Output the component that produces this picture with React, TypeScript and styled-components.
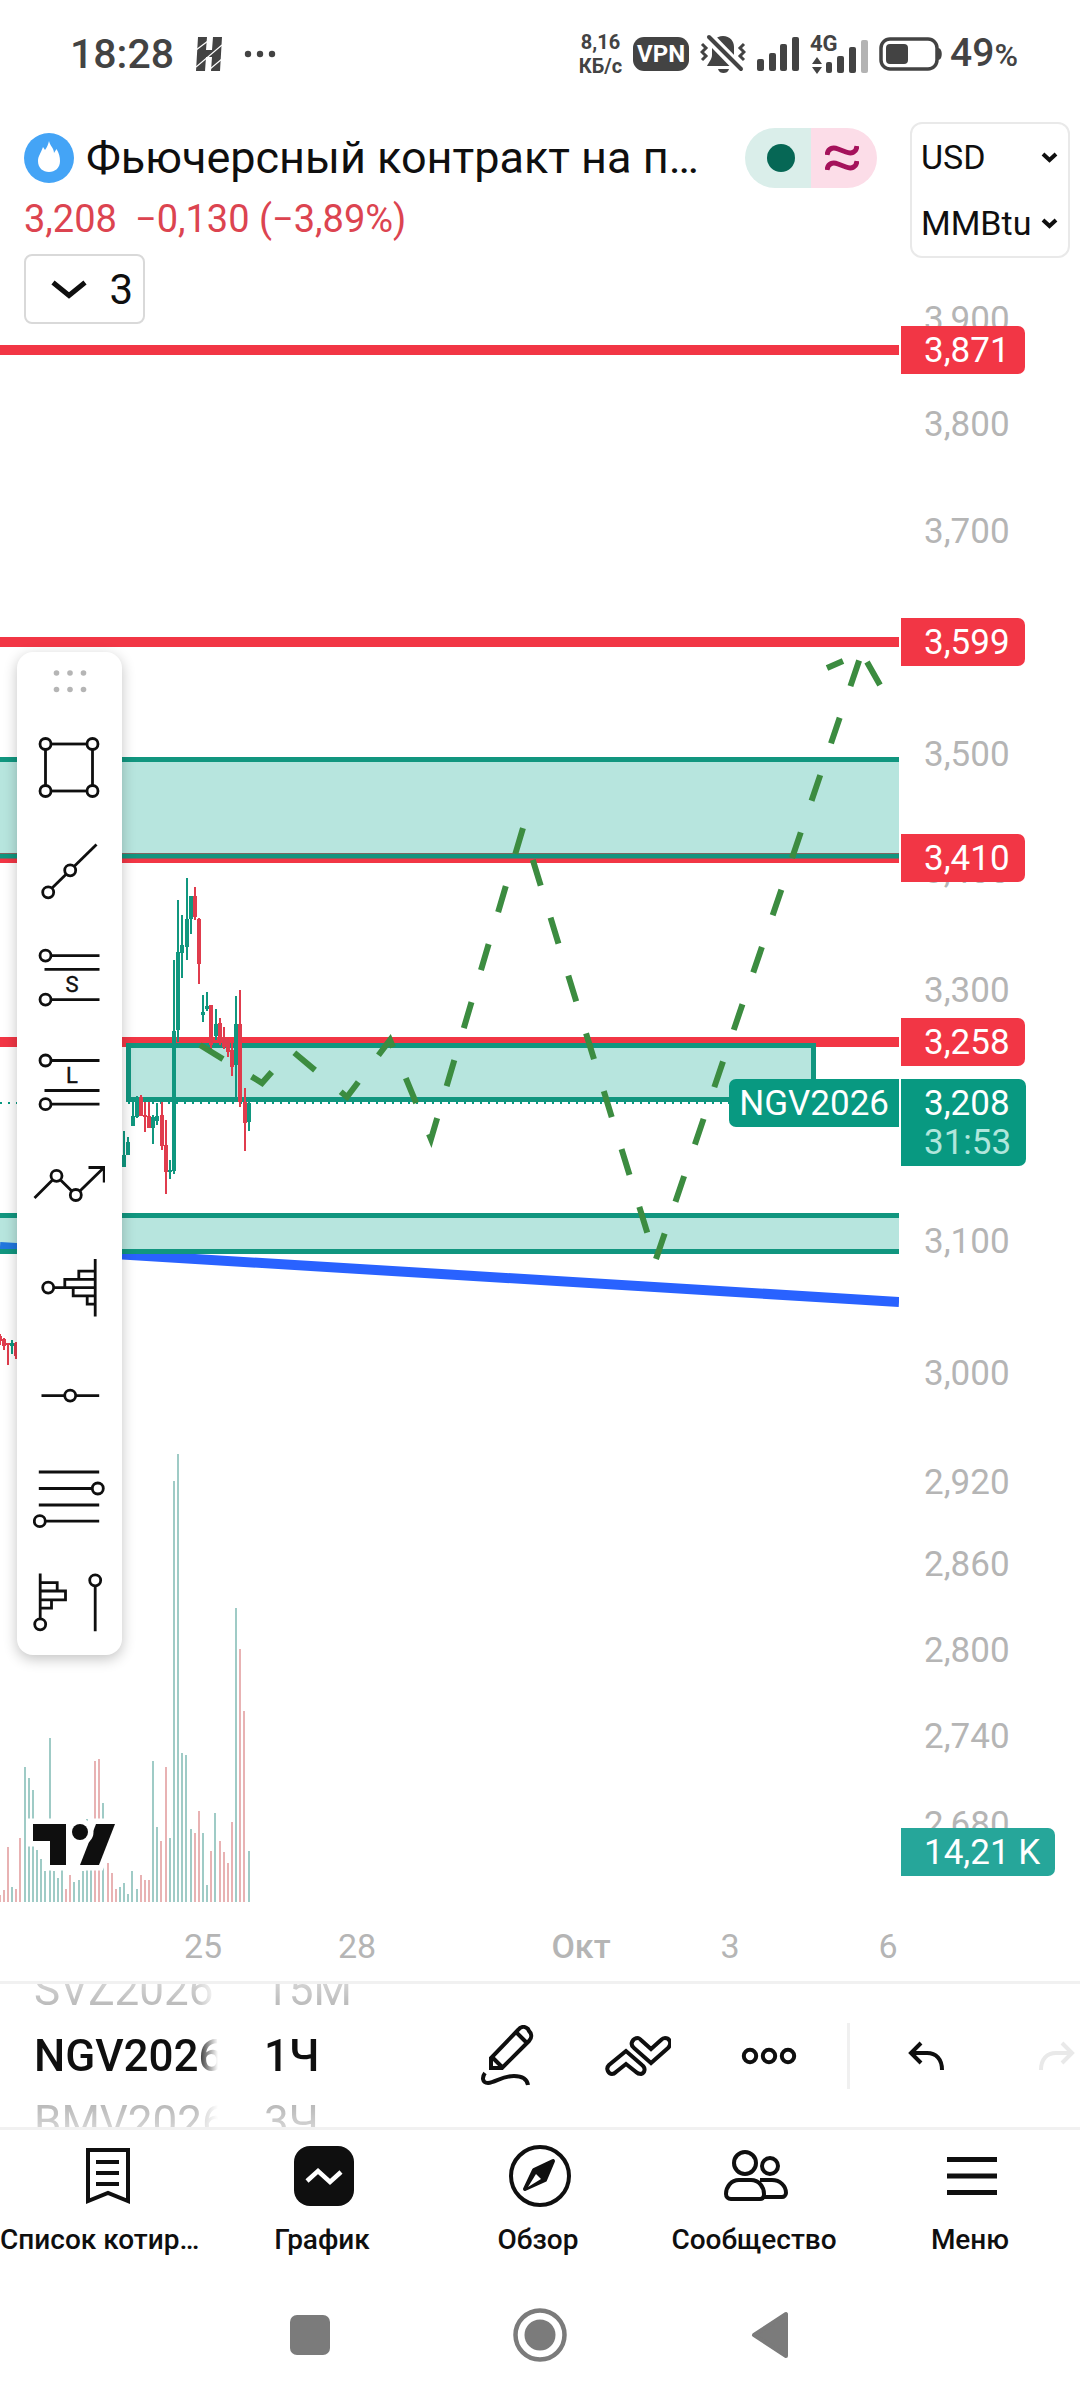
import React from "react";
import styled, { createGlobalStyle } from "styled-components";

const GlobalStyle = createGlobalStyle`
  *, *::before, *::after { box-sizing: border-box; }
  body { margin: 0; background: #fff; }
  button, select { font: inherit; color: inherit; background: none; border: 0; padding: 0; margin: 0; }
  ul { list-style: none; margin: 0; padding: 0; }
  svg { display: block; }
`;

const INK = "#0f0f0f";
const RED = "#f23645";
const GREEN = "#089981";
const MUTED = "#b5b5b5";
const STATUS = "#434343";

const Page = styled.div`
  display: flex;
  flex-direction: column;
  min-height: 100vh;
  overflow: hidden;
  color: ${INK};
  font-family: Roboto, "Noto Sans", sans-serif;
`;

/* ---------- system status bar ---------- */

const StatusBar = styled.header`
  display: flex;
  align-items: center;
  justify-content: space-between;
  height: 108px;
  padding: 0 62px 0 70px;
  color: ${STATUS};
`;

const StatusGroup = styled.div<{ $gap: number }>`
  display: flex;
  align-items: center;
  gap: ${(p) => p.$gap}px;
`;

const Clock = styled.time`
  font-size: 41px;
  font-weight: 500;
  line-height: 48px;
`;

const Speed = styled.div`
  font-size: 20px;
  font-weight: 700;
  line-height: 24px;
  text-align: center;
`;

const Vpn = styled.div`
  width: 56px;
  border-radius: 11px;
  background: ${STATUS};
  color: #fff;
  font-size: 24px;
  font-weight: 700;
  line-height: 34px;
  text-align: center;
`;

const BatteryGroup = styled.div`
  display: flex;
  align-items: center;
  gap: 7px;
`;

const BatteryText = styled.span`
  font-size: 39px;
  font-weight: 500;
  line-height: 48px;
  small { font-size: 32px; }
`;

/* ---------- chart screen ---------- */

const Screen = styled.main`
  display: grid;
  grid-template-columns: 1fr 181px;
  height: 1873px;
  flex: none;
`;

const ChartColumn = styled.section`
  display: flex;
  flex-direction: column;
  min-width: 0;
`;

const Legend = styled.div`
  display: flex;
  flex-direction: column;
  align-items: flex-start;
  padding: 20px 22px 0 24px;
`;

const TitleRow = styled.div`
  display: flex;
  align-items: center;
  gap: 12px;
  width: 100%;
  height: 60px;
`;

const Title = styled.h1`
  flex: 1;
  min-width: 0;
  margin: 0;
  overflow: hidden;
  white-space: nowrap;
  font-size: 45px;
  font-weight: 400;
  line-height: 60px;
`;

const Pill = styled.div`
  display: flex;
  border-radius: 30px;
  overflow: hidden;
`;

const PillHalf = styled.span<{ $bg: string; $side: "start" | "end" }>`
  display: flex;
  align-items: center;
  justify-content: flex-${(p) => p.$side};
  width: 66px;
  height: 60px;
  padding: 0 16px 0 14px;
  background: ${(p) => p.$bg};
`;

const PriceRow = styled.div`
  display: flex;
  gap: 18px;
  margin: 6px 0 10px;
  color: #dc4450;
  font-size: 38px;
  line-height: 50px;
`;

const CollapseButton = styled.button`
  display: flex;
  align-items: center;
  justify-content: space-between;
  width: 121px;
  height: 70px;
  padding: 0 10px 0 25px;
  border: 2px solid #d9d9d9;
  border-radius: 8px;
  font-size: 42px;
`;

const Plot = styled.div`
  position: relative;
  flex: 1;
  min-height: 0;
`;

const Drawing = styled.svg`
  width: 100%;
  height: 100%;
`;

const SymbolTag = styled.span`
  position: absolute;
  right: 0;
  padding: 2px 10px 0;
  border-radius: 7px 0 0 7px;
  background: ${GREEN};
  color: #fff;
  font-size: 35px;
  line-height: 46px;
`;

const ToolPanel = styled.aside`
  position: absolute;
  top: 328px;
  left: 17px;
  display: flex;
  flex-direction: column;
  width: 105px;
  height: 1003px;
  border-radius: 16px;
  background: #fff;
  box-shadow: 0 4px 14px rgba(0, 0, 0, 0.24);
`;

const Handle = styled.div`
  display: flex;
  justify-content: center;
  height: 63px;
  padding-top: 17px;
`;

const ToolButton = styled.button`
  display: flex;
  flex: 1;
  align-items: center;
  justify-content: center;
  padding-right: 1px;
`;

const TimeAxis = styled.div`
  position: relative;
  height: 79px;
`;

const TimeLabel = styled.span<{ $strong?: boolean }>`
  position: absolute;
  top: 24px;
  transform: translateX(-50%);
  color: ${MUTED};
  font-size: 34px;
  font-weight: ${(p) => (p.$strong ? 500 : 400)};
  line-height: 40px;
`;

const ScaleColumn = styled.section`
  display: flex;
  flex-direction: column;
  padding-top: 14px;
`;

const Units = styled.div`
  margin: 0 10px 0 11px;
  border: 2px solid #e9e9e9;
  border-radius: 12px;
`;

const UnitField = styled.label`
  display: grid;
  align-items: center;
  height: 66px;
  padding: 0 10px 0 9px;
  > * { grid-area: 1 / 1; }
  > svg { justify-self: end; pointer-events: none; }
`;

const UnitSelect = styled.select`
  width: 100%;
  appearance: none;
  font-size: 34px;
  line-height: 40px;
`;

const PriceAxis = styled.div`
  position: relative;
  flex: 1;
`;

const PriceLabel = styled.span`
  position: absolute;
  left: 25px;
  padding-top: 2px;
  transform: translateY(-50%);
  color: ${MUTED};
  font-size: 35px;
  line-height: 40px;
`;

const PriceTag = styled.div<{ $bg: string }>`
  position: absolute;
  left: 2px;
  padding: 2px 15px 0 23px;
  border-radius: 0 7px 7px 0;
  background: ${(p) => p.$bg};
  color: #fff;
  font-size: 35px;
  line-height: 46px;
  white-space: nowrap;
`;

const Countdown = styled.div`
  padding-bottom: 8px;
  color: #b0e6dc;
  line-height: 31px;
`;

/* ---------- chart toolbar ---------- */

const Toolbar = styled.div`
  display: flex;
  align-items: center;
  flex: none;
  height: 149px;
  padding-left: 34px;
  border-top: 3px solid #f1f1f1;
  border-bottom: 3px solid #f1f1f1;
  overflow: hidden;
`;

const WheelGroup = styled.div`
  display: flex;
  gap: 46px;
  margin-right: auto;
  mask-image: linear-gradient(to bottom, rgba(0, 0, 0, 0.5), #000 28%, #000 72%, rgba(0, 0, 0, 0.5));
`;

const Wheel = styled.ul<{ $width: number; $fade?: boolean }>`
  display: flex;
  flex: none;
  flex-direction: column;
  justify-content: center;
  width: ${(p) => p.$width}px;
  height: 143px;
  overflow: hidden;
  mask-image: ${(p) => (p.$fade ? "linear-gradient(to right, #000 88%, transparent)" : "none")};
`;

const WheelItem = styled.li<{ $active?: boolean }>`
  flex: none;
  height: 66px;
  button {
    display: block;
    color: ${(p) => (p.$active ? INK : "#a6a6a6")};
    font-size: 44px;
    font-weight: ${(p) => (p.$active ? 500 : 400)};
    line-height: 66px;
    white-space: nowrap;
  }
`;

const Actions = styled.div`
  display: flex;
  align-items: center;
  flex: none;
  margin-right: -42px;
`;

const ActionButton = styled.button`
  display: flex;
  align-items: center;
  justify-content: center;
  width: 131px;
  height: 100px;
  &:disabled { color: #e9e9e9; }
`;

const Separator = styled.span`
  width: 3px;
  height: 66px;
  margin: 0 10px 0 13px;
  background: #f0f0f0;
`;

/* ---------- bottom navigation ---------- */

const TabBar = styled.nav`
  display: grid;
  grid-template-columns: repeat(5, 1fr);
  height: 150px;
  padding-top: 12px;
`;

const Tab = styled.a`
  display: flex;
  flex-direction: column;
  align-items: center;
  min-width: 0;
  color: inherit;
  text-decoration: none;
`;

const TabIcon = styled.span`
  display: flex;
  align-items: center;
  height: 68px;
`;

const TabText = styled.span`
  max-width: 100%;
  overflow: hidden;
  margin-top: 13px;
  padding-right: 4px;
  text-overflow: ellipsis;
  white-space: nowrap;
  font-size: 28px;
  font-weight: 500;
  line-height: 34px;
`;

const SystemNav = styled.footer`
  display: flex;
  justify-content: center;
  gap: 170px;
  padding: 25px 0 35px;
`;

const SystemButton = styled.button`
  display: flex;
  align-items: center;
  justify-content: center;
  width: 60px;
  height: 60px;
  color: #7b7b7b;
`;

/* ---------- data ---------- */

const AXIS_TOP = 258;

const scale: [string, number][] = [
  ["3,900", 319], ["3,800", 424], ["3,700", 531], ["3,500", 754], ["3,400", 871],
  ["3,300", 990], ["3,100", 1241], ["3,000", 1373], ["2,920", 1482], ["2,860", 1564],
  ["2,800", 1650], ["2,740", 1736], ["2,680", 1824],
];

const levels: [string, number][] = [["3,871", 350], ["3,599", 642], ["3,410", 858], ["3,258", 1042]];

const dates: [string, number, boolean?][] = [["25", 203], ["28", 357], ["Окт", 581, true], ["3", 730], ["6", 888]];

// [x, high, low, body top, body bottom, rising]
const candles: [number, number, number, number, number, number][] = [
  [0, 1334, 1345, 1336, 1341, 0], [4, 1338, 1350, 1339, 1346, 0], [8, 1343, 1365, 1343, 1345, 0],
  [12, 1340, 1354, 1343, 1346, 1], [16, 1342, 1359, 1343, 1356, 0],
  [124, 1131, 1167, 1155, 1167, 1], [128, 1137, 1155, 1142, 1155, 1], [133, 1102, 1126, 1116, 1126, 1],
  [137, 1096, 1118, 1102, 1117, 1], [141, 1095, 1116, 1097, 1116, 0], [145, 1102, 1132, 1115, 1117, 0],
  [149, 1102, 1128, 1116, 1128, 0], [153, 1115, 1144, 1117, 1128, 1], [157, 1103, 1125, 1116, 1121, 1],
  [162, 1102, 1150, 1115, 1146, 0], [166, 1120, 1194, 1145, 1172, 0], [170, 1160, 1179, 1170, 1172, 1],
  [174, 960, 1174, 1031, 1171, 1], [178, 900, 1042, 952, 1030, 1], [182, 915, 978, 945, 953, 1],
  [187, 878, 960, 919, 947, 1], [191, 896, 934, 896, 919, 1], [195, 887, 920, 896, 917, 0],
  [199, 918, 984, 919, 964, 0], [203, 995, 1022, 1012, 1015, 1], [207, 992, 1011, 1006, 1009, 1],
  [211, 1005, 1050, 1005, 1045, 0], [216, 1009, 1040, 1024, 1036, 1], [220, 1018, 1045, 1023, 1040, 0],
  [224, 1027, 1049, 1038, 1047, 0], [228, 1038, 1057, 1040, 1052, 0], [232, 1042, 1076, 1050, 1067, 0],
  [236, 996, 1097, 1024, 1065, 1], [240, 990, 1107, 1024, 1102, 0], [245, 1088, 1151, 1102, 1123, 0],
  [249, 1102, 1131, 1103, 1122, 1],
];

// [x, top, rising]
const volume: [number, number, number][] = [
  [0, 1895, 0], [4, 1890, 0], [8, 1847, 0], [12, 1887, 1], [16, 1889, 0], [20, 1838, 0], [25, 1767, 1],
  [29, 1778, 1], [33, 1790, 1], [37, 1850, 1], [41, 1859, 1], [45, 1871, 1], [50, 1738, 1], [54, 1871, 1],
  [58, 1878, 1], [62, 1870, 1], [66, 1889, 0], [70, 1875, 0], [74, 1882, 1], [79, 1880, 1], [83, 1871, 1],
  [87, 1819, 1], [91, 1867, 1], [95, 1761, 0], [99, 1759, 0], [103, 1803, 1], [108, 1863, 0], [112, 1873, 0],
  [116, 1889, 0], [120, 1887, 1], [124, 1883, 1], [128, 1894, 1], [132, 1871, 1], [137, 1889, 1],
  [141, 1875, 0], [145, 1880, 0], [149, 1880, 0], [153, 1761, 1], [157, 1827, 1], [161, 1841, 0],
  [166, 1767, 0], [170, 1838, 1], [174, 1481, 1], [178, 1454, 1], [182, 1753, 1], [186, 1755, 1],
  [191, 1829, 1], [195, 1833, 0], [199, 1811, 0], [203, 1833, 1], [207, 1885, 1], [211, 1851, 0],
  [215, 1813, 1], [220, 1841, 0], [224, 1852, 0], [228, 1863, 0], [232, 1822, 0], [236, 1608, 1],
  [240, 1649, 0], [244, 1711, 0], [249, 1851, 1],
];

/* ---------- pictures ---------- */

const Chevron = ({ w, h, s }: { w: number; h: number; s: number }) => (
  <svg width={w} height={h} viewBox={`0 0 ${w} ${h}`} fill="none" stroke={INK} strokeWidth={s}>
    <path d={`M2 ${s / 2 + 1} L${w / 2} ${h - s / 2 - 1} L${w - 2} ${s / 2 + 1}`} />
  </svg>
);

const Bars = () => (
  <svg width="42" height="34" viewBox="0 0 42 34" fill={STATUS}>
    <rect x="0" y="22" width="7" height="12" rx="2" />
    <rect x="12" y="16" width="7" height="18" rx="2" />
    <rect x="23" y="7" width="7" height="27" rx="2" />
    <rect x="35" y="0" width="7" height="34" rx="2" />
  </svg>
);

const MutedBell = () => (
  <svg width="46" height="40" viewBox="0 0 46 40" fill={STATUS}>
    <path d="M23 2c-7 0-11 5-11 11v8c0 4-3 7-5 11h32c-2-4-5-7-5-11v-8c0-6-4-11-11-11z" />
    <path d="M18 35h11c-1 3-3 4-5.500 4s-4.500-1-5.500-4z" />
    <path d="M6 0L43 38" stroke="#fff" strokeWidth="11" />
    <path d="M9 3L41 35" stroke={STATUS} strokeWidth="4" strokeLinecap="round" />
    <path d="M2 10l4 4-4 4 4 4-4 4M44 10l-4 4 4 4-4 4 4 4" fill="none" stroke={STATUS} strokeWidth="3" />
  </svg>
);

const Mobile4G = () => (
  <svg width="58" height="40" viewBox="0 0 58 40" fill={STATUS}>
    <text x="0" y="17" fontSize="22" fontWeight="700">4G</text>
    <path d="M7 23l5 7H2zM7 40l5-7H2z" />
    <rect x="16" y="28" width="6" height="11" rx="2" />
    <rect x="27" y="22" width="7" height="17" rx="2" />
    <rect x="39" y="13" width="7" height="26" rx="2" />
    <rect x="51" y="6" width="7" height="33" rx="2" fill="#b3b3b3" />
  </svg>
);

const Node = ({ x, y }: { x: number; y: number }) => <circle cx={x} cy={y} r="5.500" fill="#fff" />;

const ToolGlyph = ({ children }: { children: React.ReactNode }) => (
  <svg width="72" height="72" viewBox="0 0 72 72" fill="none" stroke={INK} strokeWidth="2.800">
    {children}
  </svg>
);

const tools: [string, React.ReactNode][] = [
  ["Прямоугольник", <>
    <rect x="12.500" y="13" width="47" height="47" />
    <Node x={12.5} y={13} /><Node x={59.5} y={13} /><Node x={12.5} y={60} /><Node x={59.5} y={60} />
  </>],
  ["Линия тренда", <>
    <path d="M15 56L63.500 8.500" /><Node x={15.2} y={56.3} /><Node x={37.2} y={34.3} />
  </>],
  ["Короткая позиция", <>
    <path d="M12 15.600H66.500M11.500 29.300H66.500M12 59.600H66.500" />
    <Node x={12.5} y={15.6} /><Node x={12.5} y={59.6} />
    <text x="39" y="52" textAnchor="middle" fontSize="22" fill={INK} strokeWidth="0.400">S</text>
  </>],
  ["Длинная позиция", <>
    <path d="M12 15.500H66.500M11.500 45.500H66.500M12 59.200H66.500" />
    <Node x={12.5} y={15.5} /><Node x={12.5} y={59.2} />
    <text x="39" y="38" textAnchor="middle" fontSize="22" fill={INK} strokeWidth="0.400">L</text>
  </>],
  ["Путь", <>
    <path d="M1.500 49L23.500 27L42.800 46L71 18.500M55.500 18.500H71.200V33.500" />
    <Node x={23.5} y={26.8} /><Node x={42.8} y={46} />
  </>],
  ["Профиль объёма с привязкой", <>
    <path d="M62.200 6V63.600M62 18.100H45.800V26.400M62 26.400H31.800V34.600M15 34.600H62M40.200 34.600V42.900H62M54.200 42.900V51.200H62" />
    <Node x={15.2} y={34.6} />
  </>],
  ["Горизонтальная линия", <>
    <path d="M8.500 37.600H66.200" /><Node x={37.2} y={37.6} />
  </>],
  ["Коррекция по Фибоначчи", <>
    <path d="M5.800 10H66.200M5.800 26.500H64M5.800 43H66.200M7 59.200H66.200" />
    <Node x={64.8} y={26.5} /><Node x={6.8} y={59.2} />
  </>],
  ["Профиль объёма за период", <>
    <path d="M7.200 6.400V57M7.200 15.700H24.200V24M7.200 24H32.500V32.900H7.200M18.500 32.900V41.200H7.200M62.200 13V64.300" />
    <Node x={7.2} y={57.3} /><Node x={62.2} y={13.3} />
  </>],
];

const zoneFill = "rgba(15, 168, 145, 0.3)";

const ChartDrawing = () => (
  <Drawing viewBox="0 324 899 1578" preserveAspectRatio="none" role="img" aria-label="Свечной график NGV2026">
    <path d="M0 350H899M0 642H899M0 858H899M0 1042H899" stroke={RED} strokeWidth="10" />
    <path d="M0 1247L899 1302" stroke="#2962ff" strokeWidth="10" />
    <g fill={zoneFill}>
      <rect x="0" y="760" width="899" height="93" fill="#b7e5de" />
      <rect x="128" y="1048" width="686" height="50" />
      <rect x="0" y="1216" width="899" height="35" />
    </g>
    <path d="M0 759.500H899M0 856H899M0 1215.500H899M0 1251.500H899" stroke="#11967f" strokeWidth="5" />
    <rect x="128.500" y="1045.500" width="685" height="54" fill="none" stroke="#11967f" strokeWidth="5" />
    <path d="M0 1103H742" stroke={GREEN} strokeWidth="2" strokeDasharray="2 6" />
    <g>
      {candles.map(([x, high, low, top, bottom, up]) => (
        <g key={x} fill={up ? "#10977f" : "#e03c4d"}>
          <rect x={x - 1} y={high} width="2" height={low - high} />
          <rect x={x - 2} y={top} width="4" height={bottom - top} />
        </g>
      ))}
    </g>
    <g>
      {volume.map(([x, top, up]) => (
        <rect key={x} x={x - 1} y={top} width="2" height={1902 - top} fill={up ? "#9fcbc6" : "#e8b2b3"} />
      ))}
    </g>
    <g fill="none" stroke="#3c8c40" strokeWidth="6">
      <path d="M200 1045L262 1083L291 1050L347 1097L390 1040L431 1139L523 828L655 1258" strokeDasharray="27 33.500" />
      <path d="M656 1259L861 655" strokeDasharray="27 33.500" />
      <path d="M827 668L843 661M867 662L880 685" />
    </g>
    <g fill={INK} stroke="#fff" strokeWidth="11" paintOrder="stroke">
      <path d="M33 1824H66V1865H50V1841H33Z" />
      <path d="M96 1824H115L99 1865H80Z" />
      <circle cx="80" cy="1832" r="8" />
    </g>
  </Drawing>
);

export default function App() {
  return (
    <Page>
      <GlobalStyle />
      <StatusBar>
        <StatusGroup $gap={22}>
          <Clock>18:28</Clock>
          <svg width="26" height="34" viewBox="0 0 26 34">
            <path d="M2 0H11L10 13H16L17 0H26L24 34H15L16 20H10L9 34H0Z" fill={STATUS} />
            <path d="M0 13L12 4M0 30L26 8M14 32L26 22" stroke="#fff" strokeWidth="1.200" />
          </svg>
          <svg width="32" height="8" viewBox="0 0 32 8" fill={STATUS}>
            <circle cx="4" cy="4" r="3.200" /><circle cx="16" cy="4" r="3.200" /><circle cx="28" cy="4" r="3.200" />
          </svg>
        </StatusGroup>
        <StatusGroup $gap={11}>
          <Speed>8,16<br />КБ/с</Speed>
          <Vpn>VPN</Vpn>
          <MutedBell />
          <Bars />
          <Mobile4G />
          <BatteryGroup>
            <svg width="64" height="34" viewBox="0 0 64 34">
              <rect x="2" y="2" width="56" height="30" rx="9" fill="none" stroke={STATUS} strokeWidth="3.500" />
              <rect x="7" y="7" width="22" height="20" rx="4" fill={STATUS} />
              <path d="M59 11c5 0 5 12 0 12z" fill={STATUS} />
            </svg>
            <BatteryText>49<small>%</small></BatteryText>
          </BatteryGroup>
        </StatusGroup>
      </StatusBar>

      <Screen>
        <ChartColumn>
          <Legend>
            <TitleRow>
              <svg width="50" height="50" viewBox="0 0 50 50">
                <circle cx="25" cy="25" r="25" fill="#44a4f6" />
                <path d="M25 8c1 5 5 7 5 12l2.500-4C35 20 36 24 36 28c0 7-5 11-11 11S14 35 14 28c0-5 3-8 5-14l2 3c2-3 3-5 4-9z" fill="#fff" />
              </svg>
              <Title>Фьючерсный контракт на п…</Title>
              <Pill>
                <PillHalf $bg="#daeeea" $side="end">
                  <svg width="28" height="28" viewBox="0 0 28 28"><circle cx="14" cy="14" r="14" fill="#066755" /></svg>
                </PillHalf>
                <PillHalf $bg="#fcdde8" $side="start">
                  <svg width="34" height="28" viewBox="0 0 34 28" fill="none" stroke="#a5125b" strokeWidth="5">
                    <path d="M2 11C3 4 8 3 13 5L21 8C26 10 31 9 32 2" />
                    <path d="M2 26C3 19 8 18 13 20L21 23C26 25 31 24 32 17" />
                  </svg>
                </PillHalf>
              </Pill>
            </TitleRow>
            <PriceRow>
              <span>3,208</span>
              <span>−0,130 (−3,89%)</span>
            </PriceRow>
            <CollapseButton aria-label="Индикаторы: 3">
              <Chevron w={36} h={20} s={5} />
              <span>3</span>
            </CollapseButton>
          </Legend>

          <Plot>
            <ChartDrawing />
            <SymbolTag style={{ top: 1079 - 324 }}>NGV2026</SymbolTag>
            <ToolPanel>
              <Handle>
                <svg width="34" height="24" viewBox="0 0 34 24" fill={MUTED}>
                  {[3.5, 17, 30.5].map((x) => (
                    <React.Fragment key={x}>
                      <circle cx={x} cy="4" r="2.800" /><circle cx={x} cy="20.500" r="2.800" />
                    </React.Fragment>
                  ))}
                </svg>
              </Handle>
              {tools.map(([name, glyph]) => (
                <ToolButton key={name} aria-label={name}>
                  <ToolGlyph>{glyph}</ToolGlyph>
                </ToolButton>
              ))}
            </ToolPanel>
          </Plot>

          <TimeAxis>
            {dates.map(([text, x, strong]) => (
              <TimeLabel key={text} $strong={strong} style={{ left: x }}>{text}</TimeLabel>
            ))}
          </TimeAxis>
        </ChartColumn>

        <ScaleColumn>
          <Units>
            <UnitField>
              <UnitSelect aria-label="Валюта"><option>USD</option></UnitSelect>
              <Chevron w={17} h={12} s={4} />
            </UnitField>
            <UnitField>
              <UnitSelect aria-label="Единица измерения"><option>MMBtu</option></UnitSelect>
              <Chevron w={17} h={12} s={4} />
            </UnitField>
          </Units>
          <PriceAxis>
            {scale.map(([text, y]) => (
              <PriceLabel key={text} style={{ top: y - AXIS_TOP }}>{text}</PriceLabel>
            ))}
            {levels.map(([text, y]) => (
              <PriceTag key={text} $bg={RED} style={{ top: y - 24 - AXIS_TOP }}>{text}</PriceTag>
            ))}
            <PriceTag $bg={GREEN} style={{ top: 1079 - AXIS_TOP }}>
              3,208
              <Countdown>31:53</Countdown>
            </PriceTag>
            <PriceTag $bg="#26a69a" style={{ top: 1828 - AXIS_TOP }}>14,21 K</PriceTag>
          </PriceAxis>
        </ScaleColumn>
      </Screen>

      <Toolbar>
        <WheelGroup>
          <Wheel $width={184} $fade>
            <WheelItem><button>SVZ2026</button></WheelItem>
            <WheelItem $active><button>NGV2026</button></WheelItem>
            <WheelItem><button>BMV2026</button></WheelItem>
          </Wheel>
          <Wheel $width={120}>
            <WheelItem><button>15М</button></WheelItem>
            <WheelItem $active><button>1Ч</button></WheelItem>
            <WheelItem><button>3Ч</button></WheelItem>
          </Wheel>
        </WheelGroup>
        <Actions>
          <ActionButton aria-label="Рисование">
            <svg width="54" height="62" viewBox="0 0 54 62" fill="none" stroke="currentColor" strokeWidth="4">
              <path d="M11 43V33L38 5C41 1 45 1 48 4L49 6C52 9 52 13 49 16L22 43ZM11 31L23 43M36 7L47 18" />
              <path d="M5 48C2 52 2 58 8 58C16 57 22 51 34 51C42 51 47 54 48 60" />
            </svg>
          </ActionButton>
          <ActionButton aria-label="Шаблоны">
            <svg width="66" height="40" viewBox="0 0 66 40" fill="none" stroke="currentColor" strokeWidth="4">
              <path d="M21 15L4 29C0 33 4 38 7 38Q9 38 11 36L21 28L31 36Q33 38 36 38C40 37 41 32 37 29Z" />
              <path d="M46 27L29 12C24 8 28 2 33 2Q34 2 36 4L46 13L56 4Q58 2 60 2C65 2 67 8 63 12Z" />
            </svg>
          </ActionButton>
          <ActionButton aria-label="Ещё">
            <svg width="56" height="18" viewBox="0 0 56 18" fill="none" stroke="currentColor" strokeWidth="4">
              <circle cx="9" cy="9" r="6.200" /><circle cx="28" cy="9" r="6.200" /><circle cx="47" cy="9" r="6.200" />
            </svg>
          </ActionButton>
          <Separator />
          <ActionButton aria-label="Отменить">
            <svg width="36" height="30" viewBox="0 0 36 30" fill="none" stroke="currentColor" strokeWidth="4">
              <path d="M13 2L3 12L13 22M3 12H19C28 12 34 18 34 29" />
            </svg>
          </ActionButton>
          <ActionButton aria-label="Повторить" disabled>
            <svg width="36" height="30" viewBox="0 0 36 30" fill="none" stroke="currentColor" strokeWidth="4">
              <path d="M23 2L33 12L23 22M33 12H17C8 12 2 18 2 29" />
            </svg>
          </ActionButton>
        </Actions>
      </Toolbar>

      <TabBar>
        <Tab href="#watchlist">
          <TabIcon>
            <svg width="46" height="58" viewBox="0 0 46 58" fill="none" stroke={INK} strokeWidth="4">
              <path d="M3 3H43V54L23 46L3 54ZM11 15H34M11 26H34M11 37H34" />
            </svg>
          </TabIcon>
          <TabText>Список котировок</TabText>
        </Tab>
        <Tab href="#chart" aria-current="page">
          <TabIcon>
            <svg width="60" height="60" viewBox="0 0 60 60">
              <rect width="60" height="60" rx="16" fill={INK} />
              <path d="M13 35L24 25L36 36L47 26" fill="none" stroke="#fff" strokeWidth="4.500" />
            </svg>
          </TabIcon>
          <TabText>График</TabText>
        </Tab>
        <Tab href="#explore">
          <TabIcon>
            <svg width="62" height="62" viewBox="0 0 62 62">
              <circle cx="31" cy="31" r="29" fill="none" stroke={INK} strokeWidth="4" />
              <path d="M16 44L25 25L44 16L36 35Z" fill={INK} stroke={INK} strokeWidth="4" strokeLinejoin="round" />
              <path d="M19 42L27 29L32 34Z" fill="#fff" />
            </svg>
          </TabIcon>
          <TabText>Обзор</TabText>
        </Tab>
        <Tab href="#community">
          <TabIcon>
            <svg width="64" height="52" viewBox="0 0 64 52" fill="none" stroke={INK} strokeWidth="4">
              <circle cx="21" cy="13" r="11" /><circle cx="46" cy="16" r="8" />
              <path d="M15 30H27C35 30 40 37 40 44C40 48 38 49 36 49H7C4 49 2 47 2 44C2 37 7 30 15 30Z" />
              <path d="M36 30H48C56 30 62 36 62 43C62 45 60 47 58 47H40" />
            </svg>
          </TabIcon>
          <TabText>Сообщество</TabText>
        </Tab>
        <Tab href="#menu">
          <TabIcon>
            <svg width="50" height="40" viewBox="0 0 50 40" stroke={INK} strokeWidth="5">
              <path d="M0 3.500H50M0 20H50M0 36.500H50" />
            </svg>
          </TabIcon>
          <TabText>Меню</TabText>
        </Tab>
      </TabBar>

      <SystemNav>
        <SystemButton aria-label="Недавние">
          <svg width="40" height="40" viewBox="0 0 40 40"><rect width="40" height="40" rx="7" fill="currentColor" /></svg>
        </SystemButton>
        <SystemButton aria-label="Домой">
          <svg width="54" height="54" viewBox="0 0 54 54">
            <circle cx="27" cy="27" r="24.500" fill="none" stroke="currentColor" strokeWidth="4.500" />
            <circle cx="27" cy="27" r="15.500" fill="currentColor" />
          </svg>
        </SystemButton>
        <SystemButton aria-label="Назад">
          <svg width="38" height="48" viewBox="0 0 38 48">
            <path d="M35 3V45L3 24Z" fill="currentColor" stroke="currentColor" strokeWidth="4" strokeLinejoin="round" />
          </svg>
        </SystemButton>
      </SystemNav>
    </Page>
  );
}
